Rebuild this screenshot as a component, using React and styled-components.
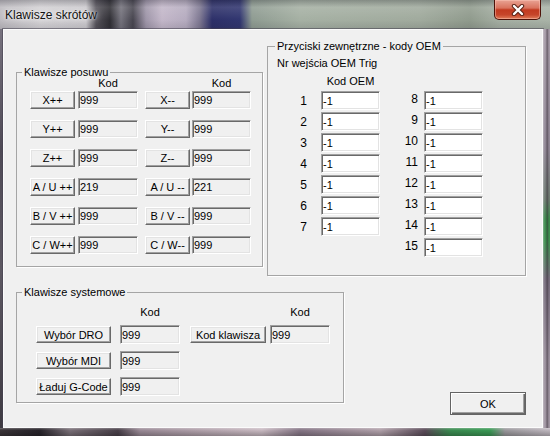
import React from 'react'
import styled, { createGlobalStyle } from 'styled-components'

const GlobalStyle = createGlobalStyle`
  html, body {
    margin: 0;
    padding: 0;
    background: #7d7a84;
  }
  body {
    font-family: "Liberation Sans", Arial, sans-serif;
    font-size: 11px;
    color: #000;
  }
`

const moveKeys = [
  ['X++', '999', 'X--', '999'],
  ['Y++', '999', 'Y--', '999'],
  ['Z++', '999', 'Z--', '999'],
  ['A / U ++', '219', 'A / U --', '221'],
  ['B / V ++', '999', 'B / V --', '999'],
  ['C / W++', '999', 'C / W--', '999'],
]

const oemLeft = [1, 2, 3, 4, 5, 6, 7]
const oemRight = [8, 9, 10, 11, 12, 13, 14, 15]

const systemKeys = [
  ['Wybór DRO', '999'],
  ['Wybór MDI', '999'],
  ['Ładuj G-Code', '999'],
]

function App() {
  return (
    <>
      <GlobalStyle />
      <Window>
        <TitleBar>
          <Title>Klawisze skrótów</Title>
          <CloseButton aria-label="Zamknij">
            <svg width="14" height="12" viewBox="0 0 14 12">
              <path d="M3 2 L11 10 M11 2 L3 10" stroke="#5b2418" strokeWidth="4.4" strokeLinecap="round" />
              <path d="M3 2 L11 10 M11 2 L3 10" stroke="#fff" strokeWidth="2.4" strokeLinecap="round" />
            </svg>
          </CloseButton>
        </TitleBar>
        <Middle>
          <LeftEdge />
          <Client>
            <TopRow>
              <Group $w={247} $h={195} $top={26}>
                <Caption>Klawisze posuwu</Caption>
                <KeyHead>
                  <HeadCell $col={2} $w={60}>Kod</HeadCell>
                  <HeadCell $col={4} $w={59}>Kod</HeadCell>
                </KeyHead>
                <KeyGrid>
                  {moveKeys.map(([a, av, b, bv]) => (
                    <React.Fragment key={a}>
                      <Button $w={45} $h={18}>{a}</Button>
                      <Field $w={60}>{av}</Field>
                      <Button $w={45} $h={18}>{b}</Button>
                      <Field $w={59}>{bv}</Field>
                    </React.Fragment>
                  ))}
                </KeyGrid>
              </Group>

              <Group $w={259} $h={230}>
                <Caption $indent={7}>Przyciski zewnętrzne - kody OEM</Caption>
                <Note>Nr wejścia OEM Trig</Note>
                <OemHead>Kod OEM</OemHead>
                <OemColumns>
                  <OemColumn $label={30} $gap={14}>
                    {oemLeft.map((n) => (
                      <React.Fragment key={n}>
                        <OemLabel>{n}</OemLabel>
                        <Field $w={59} $h={19} $white>-1</Field>
                      </React.Fragment>
                    ))}
                  </OemColumn>
                  <OemColumn $label={38} $gap={6}>
                    {oemRight.map((n) => (
                      <React.Fragment key={n}>
                        <OemLabel $raised>{n}</OemLabel>
                        <Field $w={59} $h={19} $white>-1</Field>
                      </React.Fragment>
                    ))}
                  </OemColumn>
                </OemColumns>
              </Group>
            </TopRow>

            <BottomRow>
              <Group $w={328} $h={111} $bottom={12}>
                <Caption>Klawisze systemowe</Caption>
                <SysHead>
                  <HeadCell $col={2} $w={60}>Kod</HeadCell>
                  <HeadCell $col={4} $w={60}>Kod</HeadCell>
                </SysHead>
                <SysGrid>
                  {systemKeys.map(([label, code], i) => (
                    <React.Fragment key={label}>
                      <Button $w={75} $h={17}>{label}</Button>
                      <Field $w={60} $h={19}>{code}</Field>
                      {i === 0 && (
                        <>
                          <Button $w={76} $h={17}>Kod klawisza</Button>
                          <Field $w={60} $h={19}>999</Field>
                        </>
                      )}
                      {i > 0 && <Empty $span={2} />}
                    </React.Fragment>
                  ))}
                </SysGrid>
              </Group>
              <Button $w={76} $h={23} $default>OK</Button>
            </BottomRow>
          </Client>
          <RightEdge />
        </Middle>
        <BottomEdge />
      </Window>
    </>
  )
}

export default App


const Window = styled.div`
  width: 550px;
  height: 436px;
  display: flex;
  flex-direction: column;
  overflow: hidden;
  background: #8a8590;
`

const TitleBar = styled.div`
  height: 29px;
  flex: none;
  display: flex;
  align-items: flex-start;
  padding-left: 5px;
  background:
    linear-gradient(180deg, rgba(40, 40, 50, 0.25) 0, rgba(255, 255, 255, 0.12) 25%, rgba(255, 255, 255, 0) 70%, rgba(30, 30, 40, 0.12) 100%),
    linear-gradient(90deg,
      #bdbabf 0, #d3d1d4 40px, #cbc9cd 86px, #55525a 96px, #2f2e34 110px,
      #74727c 121px, #46444e 133px, #9e95a8 146px, #c3b7c9 162px, #b5abbf 186px,
      #7c7690 200px, #2c2f68 212px, #30356f 240px, #8e9b91 252px, #a5b0a3 300px,
      #a0aa9d 420px, #8f9a8c 470px, #a4aea2 500px, #a9b3a7 550px);
`

const Title = styled.div`
  margin-top: 8px;
  font-size: 12px;
  line-height: 15px;
  color: #111;
  text-shadow: 0 0 6px rgba(255, 255, 255, 0.9), 0 0 2px rgba(255, 255, 255, 0.8);
`

const CloseButton = styled.div`
  box-sizing: border-box;
  margin-left: auto;
  margin-right: 9px;
  width: 47px;
  height: 20px;
  display: flex;
  align-items: center;
  justify-content: center;
  border: 1px solid #4d1209;
  border-top: none;
  border-radius: 0 0 5px 5px;
  background: linear-gradient(180deg, #e9a394 0%, #d9735e 42%, #c23a20 52%, #c6452a 78%, #e07d5a 100%);
  box-shadow: inset 0 0 0 1px rgba(255, 205, 190, 0.45);
`

const Middle = styled.div`
  flex: 1;
  display: flex;
  min-height: 0;
`

const LeftEdge = styled.div`
  width: 3px;
  flex: none;
  background: linear-gradient(180deg, #77727e 0, #4f4a56 30%, #5d5862 60%, #3e3a42 100%);
`

const RightEdge = styled.div`
  width: 7px;
  flex: none;
  background:
    linear-gradient(90deg, rgba(255, 255, 255, 0.35) 0, rgba(255, 255, 255, 0) 2px, rgba(0, 0, 0, 0) 3px, rgba(40, 30, 40, 0.5) 4px, rgba(0, 0, 0, 0) 6px),
    linear-gradient(180deg, #a79ca8 0, #8f8594 120px, #6d7a70 170px, #3d8a4d 190px, #3f8f50 212px, #766c7c 250px, #9a8f9c 330px, #a398a4 436px);
`

const BottomEdge = styled.div`
  height: 8px;
  flex: none;
  background:
    linear-gradient(180deg, rgba(255, 255, 255, 0.3) 0, rgba(255, 255, 255, 0) 2px, rgba(0, 0, 0, 0.25) 8px),
    linear-gradient(90deg,
      #3b3539 0, #27232a 40px, #7a7078 70px, #494049 118px, #9a8a96 140px,
      #b2a2ac 200px, #c9bac2 262px, #867686 300px, #b1a1aa 380px, #5b4b59 425px,
      #3b8b51 450px, #3a9a55 490px, #9a989c 505px, #c0b8c0 550px);
`

const Client = styled.div`
  box-sizing: border-box;
  width: 540px;
  flex: none;
  display: flex;
  flex-direction: column;
  padding: 16px 16px 12px 12px;
  background: #f0f0f0;
  border: 1px solid #fbfbfb;
  box-shadow: 0 0 0 1px rgba(70, 66, 80, 0.55);
`

const TopRow = styled.div`
  display: flex;
  align-items: flex-start;
  gap: 4px;
`

const BottomRow = styled.div`
  display: flex;
  align-items: flex-end;
  justify-content: space-between;
  margin-top: 16px;
`

const Group = styled.div`
  box-sizing: border-box;
  width: ${(p) => p.$w}px;
  height: ${(p) => p.$h}px;
  margin-top: ${(p) => p.$top || 0}px;
  margin-bottom: ${(p) => p.$bottom || 0}px;
  display: flex;
  flex-direction: column;
  align-items: flex-start;
  border: 1px solid #a5a5a5;
  box-shadow: 1px 1px 0 #fff;
`

const Caption = styled.div`
  margin: -7px 0 0 ${(p) => p.$indent || 5}px;
  padding: 0 2px;
  line-height: 13px;
  background: #f0f0f0;
  white-space: nowrap;
`

const KeyHead = styled.div`
  display: grid;
  grid-template-columns: 48px 67px 47px 59px;
  margin: -2px 0 0 13px;
  line-height: 12px;
`

const KeyGrid = styled.div`
  display: grid;
  grid-template-columns: 48px 67px 47px 59px;
  grid-auto-rows: 18px;
  row-gap: 11px;
  margin: 2px 0 0 13px;
`

const SysHead = styled.div`
  display: grid;
  grid-template-columns: 84px 70px 80px 60px;
  margin: 7px 0 0 19px;
  line-height: 13px;
`

const SysGrid = styled.div`
  display: grid;
  grid-template-columns: 84px 70px 80px 60px;
  grid-auto-rows: 19px;
  row-gap: 7px;
  align-items: center;
  margin: 6px 0 0 19px;
`

const HeadCell = styled.div`
  grid-column: ${(p) => p.$col};
  width: ${(p) => p.$w}px;
  text-align: center;
`

const Empty = styled.div`
  grid-column: span ${(p) => p.$span};
`

const Note = styled.div`
  margin: 4px 0 0 9px;
  line-height: 13px;
`

const OemHead = styled.div`
  width: 59px;
  margin: 5px 0 0 53px;
  line-height: 13px;
  text-align: center;
`

const OemColumns = styled.div`
  display: flex;
  align-items: flex-start;
  margin: 3px 0 0 9px;
`

const OemColumn = styled.div`
  display: grid;
  grid-template-columns: ${(p) => p.$label}px 59px;
  column-gap: ${(p) => p.$gap}px;
  grid-auto-rows: 19px;
  row-gap: 2px;
`

const OemLabel = styled.div`
  text-align: right;
  font-size: 12px;
  line-height: ${(p) => (p.$raised ? 17 : 21)}px;
`

const Field = styled.div`
  box-sizing: border-box;
  width: ${(p) => p.$w}px;
  height: ${(p) => p.$h || 18}px;
  display: flex;
  align-items: center;
  padding: 0 1px;
  background: ${(p) => (p.$white ? '#fff' : '#f0f0f0')};
  border: 1px solid;
  border-color: #a0a0a0 #fff #fff #a0a0a0;
  box-shadow: inset 1px 1px 0 #696969, inset -1px -1px 0 #e3e3e3;
  white-space: nowrap;
`

const Button = styled.button`
  box-sizing: border-box;
  width: ${(p) => p.$w}px;
  height: ${(p) => p.$h}px;
  display: flex;
  align-items: center;
  justify-content: center;
  padding: 0;
  margin: 0;
  font-family: inherit;
  font-size: 11px;
  color: #000;
  white-space: nowrap;
  background: #f0f0f0;
  border: 1px solid;
  border-color: ${(p) => (p.$default ? '#646464' : '#fff #696969 #696969 #fff')};
  box-shadow: ${(p) =>
    p.$default
      ? 'inset 1px 1px 0 #fff, inset -1px -1px 0 #696969, inset -2px -2px 0 #a0a0a0'
      : 'inset -1px -1px 0 #a0a0a0, inset 1px 1px 0 #e3e3e3'};
`
